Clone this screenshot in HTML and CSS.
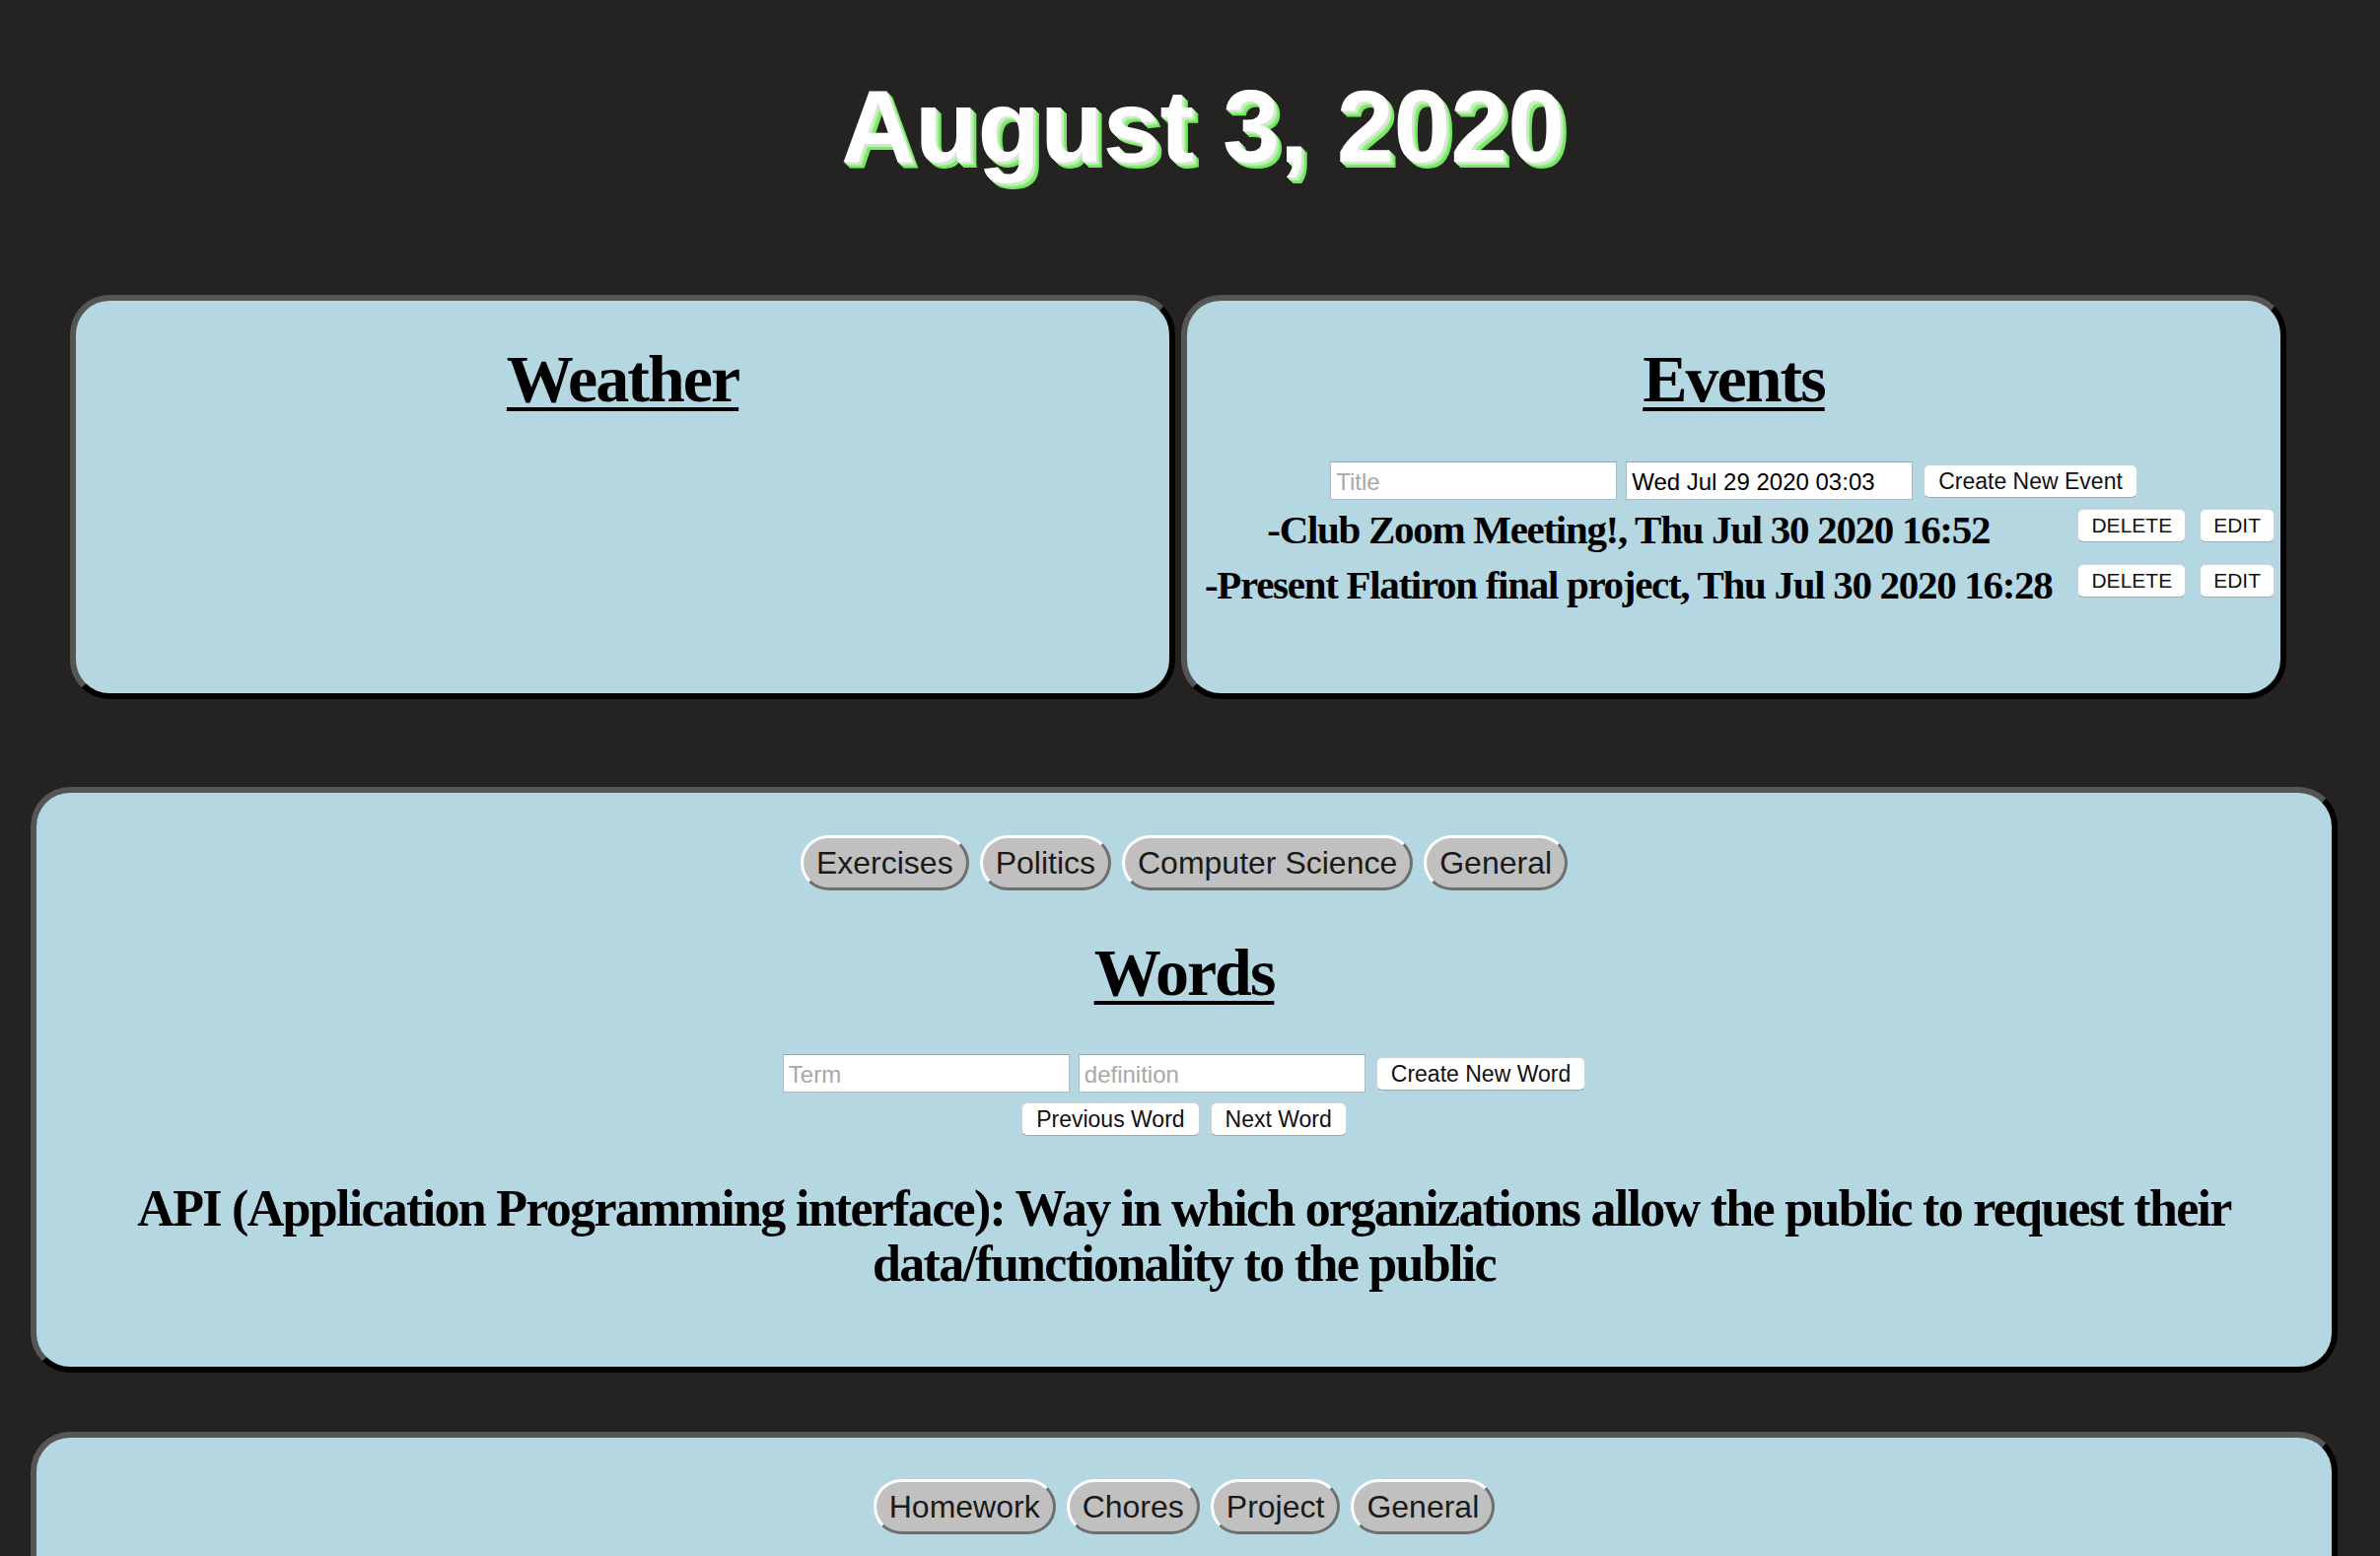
FILE: index.html
```html
<!DOCTYPE html>
<html lang="en">
<head>
<meta charset="utf-8">
<title>Dashboard</title>
<link rel="stylesheet" href="styles.css">
</head>
<body>
<div class="page">
  <h1 class="date">August 3, 2020</h1>

  <div class="top-row">
    <section class="card card-half weather">
      <h2 class="card-title">Weather</h2>
    </section>

    <section class="card card-half events">
      <h2 class="card-title">Events</h2>
      <div class="entry-row events-entry">
        <input class="text-input" type="text" placeholder="Title">
        <input class="text-input" type="text" value="Wed Jul 29 2020 03:03">
        <button class="btn">Create New Event</button>
      </div>
      <ul class="event-list">
        <li class="event-row">
          <span class="event-text">-Club Zoom Meeting!, Thu Jul 30 2020 16:52</span>
          <button class="btn btn-small">DELETE</button>
          <button class="btn btn-small btn-edit">EDIT</button>
        </li>
        <li class="event-row">
          <span class="event-text">-Present Flatiron final project, Thu Jul 30 2020 16:28</span>
          <button class="btn btn-small">DELETE</button>
          <button class="btn btn-small btn-edit">EDIT</button>
        </li>
      </ul>
    </section>
  </div>

  <section class="card card-wide words">
    <div class="tag-row">
      <button class="tag">Exercises</button>
      <button class="tag">Politics</button>
      <button class="tag">Computer Science</button>
      <button class="tag">General</button>
    </div>
    <h2 class="card-title words-title">Words</h2>
    <div class="entry-row words-entry">
      <input class="text-input" type="text" placeholder="Term">
      <input class="text-input" type="text" placeholder="definition">
      <button class="btn">Create New Word</button>
    </div>
    <div class="nav-row">
      <button class="btn">Previous Word</button>
      <button class="btn">Next Word</button>
    </div>
    <p class="definition">API (Application Programming interface): Way in which organizations allow the public to request their data/functionality to the public</p>
  </section>

  <section class="card card-wide todos">
    <div class="tag-row">
      <button class="tag">Homework</button>
      <button class="tag">Chores</button>
      <button class="tag">Project</button>
      <button class="tag">General</button>
    </div>
  </section>
</div>
</body>
</html>
```

FILE: styles.css
```css
* {
  box-sizing: border-box;
}

html, body {
  margin: 0;
  padding: 0;
  background: #242322;
}

body {
  font-family: "Liberation Serif", "Times New Roman", serif;
  color: #000;
}

.page {
  padding-top: 68px;
  padding-bottom: 200px;
}

.date {
  margin: 0;
  padding-left: 26px;
  text-align: center;
  font-family: "Liberation Sans", Arial, sans-serif;
  font-weight: 700;
  font-size: 104px;
  line-height: 120px;
  color: #ffffff;
  text-shadow: 1px 1px 0 #dcdcdc, 2px 2px 0 #c8f4bf, 3px 3px 0 #b2f0a6, 4px 4px 0 #88ec76, 5px 5px 0 #74e860, 6px 6px 0 #74e860;
}

.top-row {
  display: flex;
  gap: 6px;
  margin-top: 111px;
  padding-left: 71px;
}

.card {
  background: #b4d7e2;
  border: 6px solid;
  border-color: #555555 #000000 #000000 #555555;
  border-radius: 40px;
}

.card-half {
  width: 1121px;
  height: 410px;
  padding-top: 45px;
}

.card-wide {
  width: 2340px;
  margin-left: 31px;
}

.card-title {
  margin: 0;
  text-align: center;
  font-family: "Liberation Serif", "Times New Roman", serif;
  font-weight: 700;
  font-size: 68px;
  line-height: 68px;
  letter-spacing: -2px;
  text-decoration: underline;
  text-decoration-thickness: 4px;
  text-underline-offset: 6px;
}

.entry-row {
  display: flex;
  justify-content: center;
  align-items: center;
  gap: 9px;
}

.events-entry {
  margin-top: 50px;
}

.text-input {
  width: 291px;
  height: 39px;
  margin: 0;
  padding: 2px 5px 0;
  background: #ffffff;
  border: 1px solid #a9bcc7;
  border-top-color: #8fa6b3;
  border-radius: 0;
  font-family: "Liberation Sans", Arial, sans-serif;
  font-size: 24px;
  color: #000;
}

.text-input::placeholder {
  color: #a8a8a8;
}

.btn {
  height: 34px;
  margin: 0;
  padding: 0 14px;
  background: #ffffff;
  border: 1px solid #c9d3d8;
  border-bottom-color: #9aa7ad;
  border-radius: 6px;
  font-family: "Liberation Sans", Arial, sans-serif;
  font-size: 23px;
  line-height: 32px;
  color: #111;
  white-space: nowrap;
}

.entry-row .btn {
  margin-left: 2px;
}

.event-list {
  list-style: none;
  margin: 2px 0 0 0;
  padding: 0 6px 0 0;
}

.event-row {
  display: flex;
  align-items: flex-start;
  height: 56px;
}

.event-text {
  flex: 1;
  text-align: center;
  font-weight: 700;
  font-size: 41px;
  line-height: 56px;
  letter-spacing: -1.3px;
  white-space: nowrap;
}

.btn-small {
  margin-top: 7px;
  margin-left: 8px;
  padding: 0 13px;
  font-size: 21px;
}

.btn-small.btn-edit {
  margin-left: 14px;
}

.words {
  margin-top: 89px;
  padding: 43px 20px 76px;
}

.tag-row {
  display: flex;
  justify-content: center;
  gap: 11px;
}

.tag {
  height: 56px;
  margin: 0;
  padding: 0 13px;
  background: #c0c0c0;
  border: 3px solid;
  border-color: #ffffff #6f6f6f #6f6f6f #ffffff;
  border-radius: 28px;
  font-family: "Liberation Sans", Arial, sans-serif;
  font-size: 32px;
  line-height: 48px;
  color: #1a1a1a;
}

.words-title {
  margin-top: 49px;
}

.words-entry {
  margin-top: 49px;
}

.nav-row {
  display: flex;
  justify-content: center;
  gap: 11px;
  margin-top: 10px;
}

.definition {
  margin: 46px 0 0 0;
  text-align: center;
  font-weight: 700;
  font-size: 52px;
  line-height: 56px;
  letter-spacing: -1.7px;
}

.todos {
  margin-top: 60px;
  height: 400px;
  padding-top: 42px;
}
```
